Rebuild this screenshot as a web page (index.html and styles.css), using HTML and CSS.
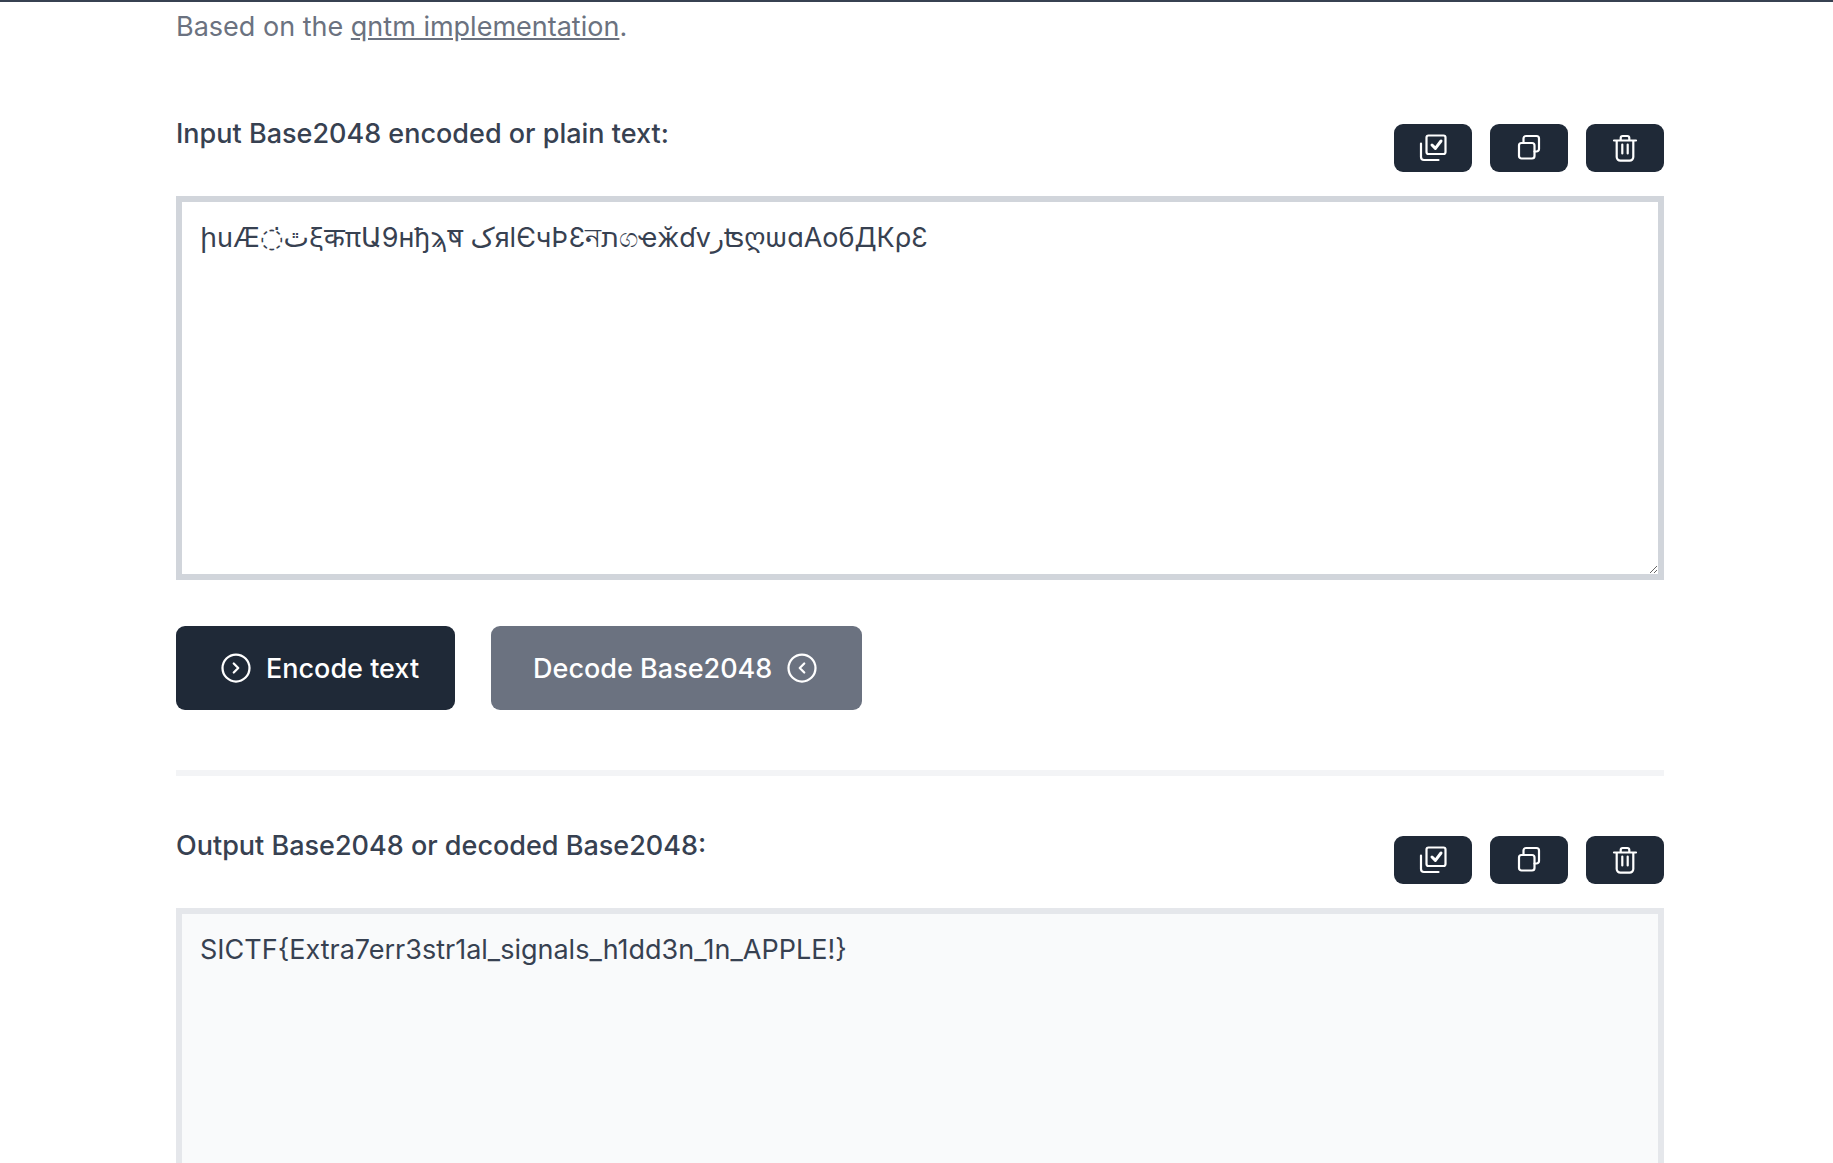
FILE: index.html
```html
<!DOCTYPE html>
<html lang="en">
  <head>
    <meta charset="UTF-8" />
    <title>Base2048 encoder and decoder</title>
    <link rel="stylesheet" href="styles.css">
  </head>
  <body>
    <main class="container">
      <p class="intro">Based on the <a href="#">qntm implementation</a>.</p>

      <div class="field-head">
        <label class="field-label" for="input-text">Input Base2048 encoded or plain text:</label>
        <div class="tools">
          <button class="tool-btn" title="Select all">
            <svg class="tool-icon" viewBox="0 0 36 36"><path d="M6 13.5V27a3 3 0 0 0 3 3h14.5"/><rect x="11.5" y="5.5" width="19" height="18.5" rx="2"/><path class="tick" d="M17 15l3.4 3.4L26 11"/></svg>
          </button>
          <button class="tool-btn" title="Copy">
            <svg class="tool-icon" viewBox="0 0 36 36"><rect x="8" y="13" width="15.5" height="15.5" rx="2.5"/><path d="M12.5 13v-4.5a2.5 2.5 0 0 1 2.5-2.5h10.500a2.500 2.500 0 0 1 2.500 2.500V19a2.500 2.500 0 0 1-2.500 2.500h-2"/></svg>
          </button>
          <button class="tool-btn" title="Clear">
            <svg class="tool-icon" viewBox="0 0 36 36"><path d="M7 10.500h22M13.700 10V8a2 2 0 0 1 2-2h4.600a2 2 0 0 1 2 2v2M9.700 10.500V27a3.700 3.700 0 0 0 3.700 3.700h9.200a3.700 3.700 0 0 0 3.700-3.700V10.500M15.300 14.500v9M20.700 14.500v9"/></svg>
          </button>
        </div>
      </div>
      <textarea id="input-text" class="text-box" spellcheck="false">իuӔ◌̇ٿξकπԱ9ʜђϡष کяӏЄчÞƐনתගҽӂɗvرʦღѡɑАобДКρƐ</textarea>

      <div class="actions">
        <button class="action-btn encode">
          <svg class="action-icon" viewBox="0 0 24 24"><circle cx="12" cy="12" r="9"/><path d="M10.500 15l3-3-3-3"/></svg>
          Encode text
        </button>
        <button class="action-btn decode">
          Decode Base2048
          <svg class="action-icon" viewBox="0 0 24 24"><circle cx="12" cy="12" r="9"/><path d="M13.500 15l-3-3 3-3"/></svg>
        </button>
      </div>

      <hr class="divider" />

      <div class="field-head">
        <label class="field-label" for="output-text">Output Base2048 or decoded Base2048:</label>
        <div class="tools">
          <button class="tool-btn" title="Select all">
            <svg class="tool-icon" viewBox="0 0 36 36"><path d="M6 13.500V27a3 3 0 0 0 3 3h14.500"/><rect x="11.500" y="5.500" width="19" height="18.500" rx="2"/><path class="tick" d="M17 15l3.400 3.400L26 11"/></svg>
          </button>
          <button class="tool-btn" title="Copy">
            <svg class="tool-icon" viewBox="0 0 36 36"><rect x="8" y="13" width="15.500" height="15.500" rx="2.500"/><path d="M12.500 13v-4.500a2.500 2.500 0 0 1 2.500-2.500h10.500a2.500 2.500 0 0 1 2.500 2.500V19a2.500 2.500 0 0 1-2.500 2.500h-2"/></svg>
          </button>
          <button class="tool-btn" title="Clear">
            <svg class="tool-icon" viewBox="0 0 36 36"><path d="M7 10.500h22M13.700 10V8a2 2 0 0 1 2-2h4.600a2 2 0 0 1 2 2v2M9.700 10.500V27a3.700 3.700 0 0 0 3.700 3.700h9.200a3.700 3.700 0 0 0 3.700-3.700V10.500M15.300 14.500v9M20.700 14.500v9"/></svg>
          </button>
        </div>
      </div>
      <textarea id="output-text" class="text-box output" readonly spellcheck="false">SICTF{Extra7err3str1al_signals_h1dd3n_1n_APPLE!}</textarea>
    </main>
  </body>
</html>
```
FILE: styles.css
```css
html,
body {
  height: 100%;
}
body {
  margin: 0;
  overflow: hidden;
  background: #fff;
  border-top: 2px solid #374151;
  box-sizing: border-box;
  font-family: Inter, "Noto Sans", sans-serif;
  font-size: 27px;
  line-height: 42px;
  color: #374151;
}
.container {
  width: 1488px;
  margin-left: 176px;
}

.intro {
  margin: 4px 0 65px 0;
  color: #6b7280;
}
.intro a {
  color: #6b7280;
}

.field-head {
  display: flex;
  justify-content: space-between;
  align-items: flex-start;
  margin-bottom: 24px;
}
.field-label {
  font-weight: 500;
}
.tools {
  display: flex;
  gap: 18px;
  margin-top: 11px;
}
.tool-btn {
  display: flex;
  align-items: center;
  justify-content: center;
  width: 78px;
  height: 48px;
  padding: 0;
  background: #1f2937;
  border: none;
  border-radius: 9px;
}
.tool-icon {
  width: 36px;
  height: 36px;
  fill: none;
  stroke: #fff;
  stroke-width: 2.2;
  stroke-linecap: round;
  stroke-linejoin: round;
}
.tool-icon .tick {
  stroke-width: 3;
}

.text-box {
  display: block;
  width: 100%;
  height: 384px;
  padding: 18px;
  box-sizing: border-box;
  background: #fff;
  border: 6px solid #d1d5db;
  border-radius: 0;
  outline: none;
  font-family: Inter, "DejaVu Sans", "Noto Sans", sans-serif;
  font-size: 27px;
  line-height: 36px;
  color: #374151;
}
.output {
  background: #f9fafb;
  border-color: #e5e7eb;
}

.actions {
  display: flex;
  gap: 36px;
  margin-top: 46px;
}
.action-btn {
  display: flex;
  align-items: center;
  gap: 12px;
  height: 84px;
  padding: 0 36px 0 42px;
  border: none;
  border-radius: 9px;
  font-family: inherit;
  font-size: 27px;
  font-weight: 500;
  color: #fff;
}
.encode {
  background: #1f2937;
}
.decode {
  padding: 0 42px 0 42px;
  background: #6b7280;
}
.action-icon {
  width: 36px;
  height: 36px;
  fill: none;
  stroke: #fff;
  stroke-width: 1.5;
  stroke-linecap: round;
  stroke-linejoin: round;
}

.divider {
  height: 6px;
  margin: 60px 0 49px 0;
  background: #f3f4f6;
  border: none;
}
```
